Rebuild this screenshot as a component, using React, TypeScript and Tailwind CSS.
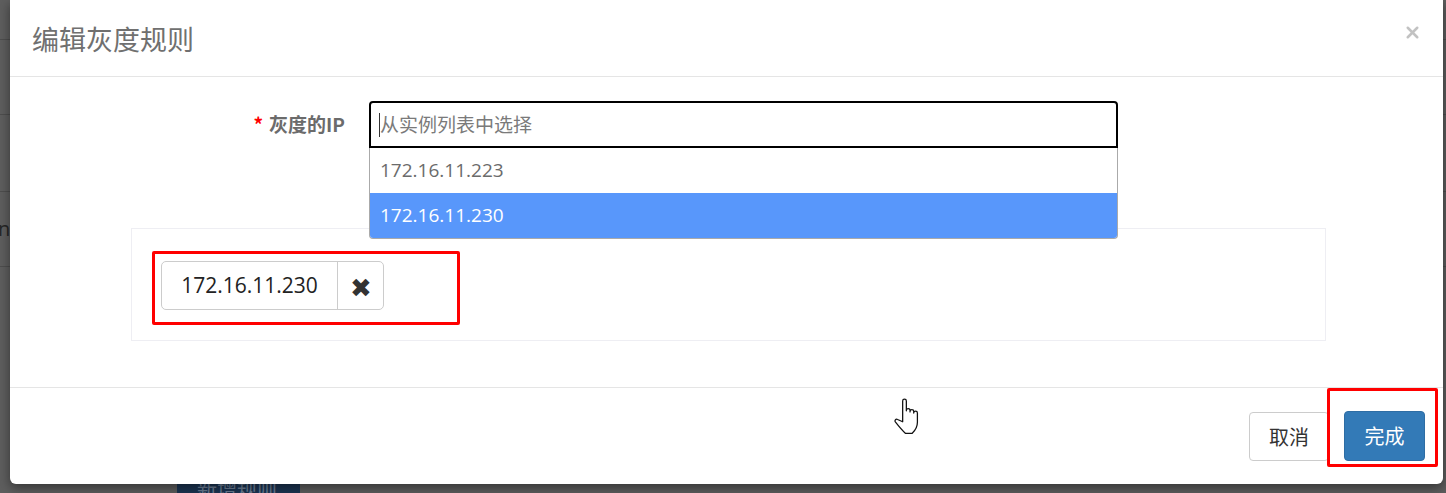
import { X } from "lucide-react";

const cjk = { fontFamily: '"Noto Sans CJK SC", "Open Sans", sans-serif' };
const latin = { fontFamily: '"Open Sans", "Noto Sans CJK SC", sans-serif' };

function HandCursor() {
  return (
    <svg width="30" height="38" viewBox="0 0 26 33" className="block">
      <path
        d="M7.5 18 V3.5 a1.6 1.6 0 0 1 3.2 0 V12 V11.6 a1.6 1.6 0 0 1 3.2 0 V13 V12.6 a1.6 1.6 0 0 1 3.2 0 V14 V13.8 a1.6 1.6 0 0 1 3.2 0 V22 c0 4 -1.8 7 -4.5 9.5 h-6 c-2.5 -2.2 -5.5 -5.8 -8.5 -9.6 c-1.1 -1.5 0.2 -3.2 1.8 -2.4 L7.5 21.5 Z"
        fill="#fff"
        stroke="#111"
        strokeWidth="1.1"
        strokeLinejoin="round"
      />
    </svg>
  );
}

export default function App() {
  return (
    <div className="relative h-[493px] w-full overflow-hidden bg-[#5e5e5e]" style={cjk}>
      {/* page behind the overlay */}
      <div className="flex h-full flex-col">
        <div className="h-[40px] border-b border-[#4e4e4e]" />
        <div className="h-[75px] border-b border-[#4e4e4e]" />
        <div className="h-[77px] border-b border-[#4e4e4e]" />
        <div className="flex h-[75px] items-center border-b border-[#4e4e4e] text-[20px] text-[#262626]" style={latin}>
          <span className="-ml-[2px]">ne</span>
        </div>
        <div className="flex-1" />
        <div className="flex h-[9px] pl-[177px]">
          <div className="w-[123px] overflow-hidden bg-[#1c3553] pl-[20px] text-[20px] leading-[10px] text-[#6d7f96]">新增规则</div>
        </div>
      </div>

      {/* modal dialog */}
      <div className="absolute left-[10px] top-0 flex h-[484px] w-[1433px] flex-col rounded-b-[6px] bg-white shadow-[0_4px_12px_rgba(0,0,0,0.45)]">
        <div className="flex h-[77px] shrink-0 items-center justify-between border-b border-[#e5e5e5] pl-[22px] pr-[21px]">
          <h4 className="text-[27px] leading-none text-[#707070]">编辑灰度规则</h4>
          <X className="mb-[12px] h-[19px] w-[19px] text-[#c2c2c2]" strokeWidth={3.2} />
        </div>

        <div className="pt-[24px]">
          <div className="flex items-center">
            <label className="w-[336px] pr-[1px] text-right text-[19px] font-bold text-[#6b6b6b]">
              <span className="mr-[6px] text-[#ff0000]">*</span>灰度的IP
            </label>
            <div className="relative ml-[23px] w-[749px]">
              <div className="flex h-[47px] items-center rounded-t-[4px] border-2 border-black pl-[8px]">
                <span className="h-[24px] w-px bg-[#333]" />
                <span className="text-[19px] text-[#7a7a7a]">从实例列表中选择</span>
              </div>
              <ul className="absolute left-0 right-0 top-full z-10 overflow-hidden rounded-b-[4px] border border-t-0 border-[#aaa] bg-white text-[19px]" style={latin}>
                <li className="flex h-[45px] items-center pl-[10px] text-[#6b6b6b]">172.16.11.223</li>
                <li className="flex h-[45px] items-center bg-[#5897fb] pl-[10px] text-white">172.16.11.230</li>
              </ul>
            </div>
          </div>

          <div className="relative mb-[46px] ml-[121px] mt-[80px] h-[113px] w-[1195px] border border-[#eeeef3] pl-[29px] pt-[32px]">
            <div className="flex h-[49px] w-[223px] rounded-[5px] border border-[#cccccc]">
              <span className="flex w-[176px] items-center justify-center border-r border-[#cccccc] text-[21px] text-[#222]" style={latin}>
                172.16.11.230
              </span>
              <span className="flex flex-1 items-center justify-center text-[26px] leading-none text-[#333]">✖</span>
            </div>
            <div className="pointer-events-none absolute left-[20px] top-[22px] h-[74px] w-[308px] rounded-[2px] border-[3px] border-[#ff0000]" />
          </div>
        </div>

        <div className="flex flex-1 items-start justify-end gap-[15px] border-t border-[#e5e5e5] pr-[18px] pt-[23px]">
          <button className="mt-[1px] h-[49px] w-[80px] rounded-[4px] border border-[#cccccc] bg-white text-[20px] text-[#333]">取消</button>
          <button className="h-[50px] w-[81px] rounded-[4px] border border-[#2e6da4] bg-[#337ab7] text-[20px] text-white">完成</button>
        </div>

        <div className="pointer-events-none absolute left-[1317px] top-[388px] h-[79px] w-[111px] rounded-[2px] border-[3px] border-[#ff0000]" />
        <div className="pointer-events-none absolute left-[884px] top-[397px]">
          <HandCursor />
        </div>
      </div>
    </div>
  );
}
